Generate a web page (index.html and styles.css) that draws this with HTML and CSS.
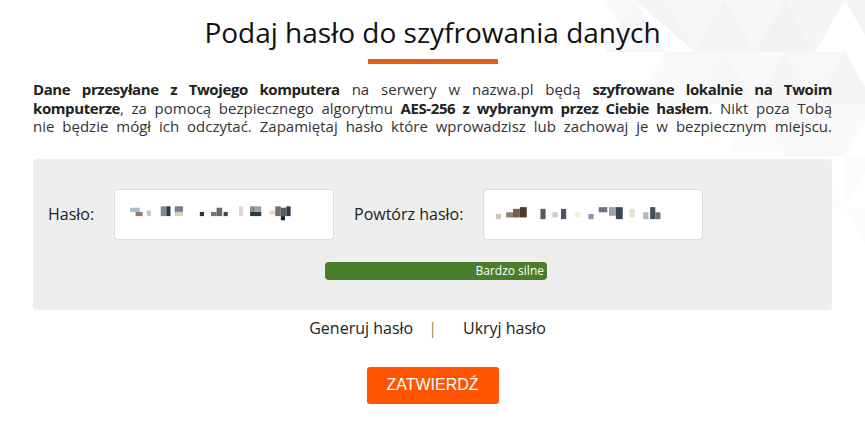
FILE: index.html
```html
<!DOCTYPE html>
<html lang="pl">
<head>
  <meta charset="UTF-8">
  <meta name="viewport" content="width=device-width, initial-scale=1.0">

  <title>Szyfrowanie danych</title>

  <link rel="stylesheet" href="styles.css">
</head>
<body>

<svg class="bg-pattern" width="260" height="330" viewBox="0 0 260 330">
  <polygon points="0,0 30,0 15,26" fill="#f9f9f9"/>
  <polygon points="30,0 60,52 0,52" fill="#f7f7f7"/>
  <polygon points="60,0 90,52 30,0" fill="#f4f4f4"/>
  <polygon points="90,52 120,0 60,0" fill="#f6f6f6"/>
  <polygon points="120,0 150,52 90,52" fill="#f3f3f3"/>
  <polygon points="150,52 180,0 120,0" fill="#f7f7f7"/>
  <polygon points="180,0 210,52 150,52" fill="#f2f2f2"/>
  <polygon points="210,52 240,0 180,0" fill="#f5f5f5"/>
  <polygon points="240,0 260,35 260,0" fill="#f3f3f3"/>
  <polygon points="60,52 90,104 30,104" fill="#fafafa"/>
  <polygon points="90,104 120,52 60,52" fill="#f8f8f8"/>
  <polygon points="120,52 150,104 90,104" fill="#f6f6f6"/>
  <polygon points="150,104 180,52 120,52" fill="#f9f9f9"/>
  <polygon points="180,52 210,104 150,104" fill="#f5f5f5"/>
  <polygon points="210,104 240,52 180,52" fill="#f8f8f8"/>
  <polygon points="240,52 260,87 260,104 210,104" fill="#f4f4f4"/>
  <polygon points="150,104 180,156 120,156" fill="#fbfbfb"/>
  <polygon points="180,156 210,104 150,104" fill="#f9f9f9"/>
  <polygon points="210,104 240,156 180,156" fill="#f8f8f8"/>
  <polygon points="240,156 260,121 260,104 210,104" fill="#fafafa"/>
  <polygon points="210,156 240,208 180,208" fill="#fcfcfc"/>
  <polygon points="240,208 260,173 260,156 240,156" fill="#fbfbfb"/>
  <polygon points="240,208 260,243 260,208" fill="#fcfcfc"/>
</svg>

<div class="page">
  <h1 class="title">Podaj hasło do szyfrowania danych</h1>
  <div class="title-line"></div>

  <p class="intro">
    <b>Dane przesyłane z Twojego komputera</b> na serwery w nazwa.pl będą <b>szyfrowane lokalnie na Twoim</b><br>
    <b>komputerze</b>, za pomocą bezpiecznego algorytmu <b>AES-256 z wybranym przez Ciebie hasłem</b>. Nikt poza Tobą<br>
    nie będzie mógł ich odczytać. Zapamiętaj hasło które wprowadzisz lub zachowaj je w bezpiecznym miejscu.
  </p>

  <div class="pass-box">
    <div class="pass-row">
      <label class="pass-label">Hasło:</label>
      <div class="pass-input">
        <!-- rozmyte haslo -->
        <svg width="162" height="24" viewBox="0 2 116 17">
          <rect x="0" y="6" width="7" height="3" fill="#a9bccb"/>
          <rect x="4" y="9" width="5" height="3" fill="#8c7a6e"/>
          <rect x="12" y="8" width="3" height="4" fill="#b6cfdc"/>
          <rect x="22" y="5" width="4" height="7" fill="#7f8c98"/>
          <rect x="26" y="5" width="3" height="7" fill="#333a44"/>
          <rect x="32" y="5" width="6" height="4" fill="#7a7e8c"/>
          <rect x="32" y="9" width="6" height="3" fill="#d6d2b8"/>
          <rect x="50" y="9" width="3" height="3" fill="#333"/>
          <rect x="58" y="9" width="4" height="3" fill="#777"/>
          <rect x="62" y="6" width="4" height="6" fill="#6b6b63"/>
          <rect x="67" y="9" width="3" height="3" fill="#444"/>
          <rect x="78" y="5" width="3" height="7" fill="#e0d6d6"/>
          <rect x="86" y="5" width="4" height="4" fill="#8a8a8a"/>
          <rect x="86" y="9" width="8" height="3" fill="#2f3a48"/>
          <rect x="90" y="5" width="4" height="4" fill="#9aa0a4"/>
          <rect x="100" y="8" width="4" height="3" fill="#e8d8d0"/>
          <rect x="104" y="5" width="4" height="7" fill="#6c7572"/>
          <rect x="108" y="6" width="4" height="6" fill="#586064"/>
          <rect x="112" y="5" width="3" height="7" fill="#2d3a50"/>
          <rect x="108" y="12" width="3" height="3" fill="#222"/>
        </svg>
      </div>
      <label class="pass-label repeat">Powtórz hasło:</label>
      <div class="pass-input second">
        <svg width="168" height="24" viewBox="0 2 97 14">
          <rect x="0" y="9" width="3" height="3" fill="#ccc4b8"/>
          <rect x="6" y="8" width="4" height="3" fill="#8d8078"/>
          <rect x="10" y="6" width="4" height="5" fill="#7a5e48"/>
          <rect x="14" y="5" width="4" height="6" fill="#4a3a30"/>
          <rect x="26" y="6" width="3" height="6" fill="#555c66"/>
          <rect x="33" y="8" width="3" height="3" fill="#c8ccd4"/>
          <rect x="38" y="6" width="3" height="6" fill="#4a5463"/>
          <rect x="46" y="8" width="3" height="3" fill="#f4f0d8"/>
          <rect x="54" y="9" width="3" height="3" fill="#8a96a4"/>
          <rect x="60" y="5" width="5" height="3" fill="#6b7480"/>
          <rect x="66" y="5" width="4" height="5" fill="#9aa1a8"/>
          <rect x="70" y="5" width="4" height="7" fill="#3a4656"/>
          <rect x="78" y="6" width="3" height="5" fill="#e8e0c8"/>
          <rect x="86" y="8" width="3" height="4" fill="#b0b6ba"/>
          <rect x="90" y="5" width="3" height="7" fill="#44505c"/>
          <rect x="93" y="8" width="3" height="4" fill="#6a7078"/>
        </svg>
      </div>
    </div>

    <div class="strength">
      <div class="strength-bar">Bardzo silne</div>
    </div>
  </div>

  <div class="links">
    <a class="link">Generuj hasło</a>
    <span class="sep">|</span>
    <a class="link">Ukryj hasło</a>
  </div>

  <div class="actions">
    <button class="submit">ZATWIERDŹ</button>
  </div>
</div>

</body>
</html>
```

FILE: styles.css
```css
body {
  margin: 0;
  font-family: 'Open Sans', sans-serif;
  color: #222;
  background-color: #fff;
  position: relative;
  overflow: hidden;
}

.bg-pattern {
  position: absolute;
  top: 0;
  right: 0;
  z-index: -1;
}

.page {
  width: 799px;
  margin: 0 auto;
  padding-top: 13px;
}

.title {
  margin: 0;
  text-align: center;
  font-size: 28px;
  font-weight: 400;
  line-height: 38px;
  color: #111;
}

.title-line {
  width: 130px;
  height: 5px;
  margin: 8px auto 0;
  background-color: #e35f1c;
}

/* 3 linie jak w oryginale, kazda wyjustowana */
.intro {
  margin: 16px 0 0;
  font-size: 15px;
  line-height: 18.5px;
  text-align: justify;
  text-align-last: justify;
  white-space: nowrap;
  color: #333;
}

.intro b {
  font-weight: 700;
  letter-spacing: -0.4px;
  color: #222;
}

.pass-box {
  margin-top: 23px;
  padding: 30px 0 30px 15px;
  background-color: #eeeeee;
  border-radius: 4px;
}

.pass-row {
  display: flex;
  align-items: center;
}

.pass-label {
  font-size: 16px;
  color: #222;
  width: 66px;
  flex-shrink: 0;
}

.pass-label.repeat {
  width: auto;
  margin-left: 20px;
  margin-right: 20px;
}

.pass-input {
  flex-shrink: 0;
  width: 220px;
  height: 51px;
  border: 1px solid #dcdcdc;
  border-radius: 4px;
  background-color: #fff;
  display: flex;
  align-items: center;
  padding-left: 15px;
  box-sizing: border-box;
}

.pass-input.second {
  padding-left: 11px;
}

.strength {
  display: flex;
  padding-left: 277px;
  margin-top: 22px;
}

.strength-bar {
  width: 222px;
  height: 18px;
  box-sizing: border-box;
  padding-right: 3px;
  border-radius: 4px;
  background-color: #4a7d2a;
  color: #fff;
  font-size: 12px;
  line-height: 18px;
  text-align: right;
}

.links {
  display: flex;
  justify-content: center;
  align-items: center;
  margin-top: 8px;
  padding-right: 10px;
  font-size: 16px;
  line-height: 20px;
  color: #222;
}

.link {
  cursor: pointer;
}

.sep {
  color: #a88a50;
  margin: 0 26px 0 15px;
}

.actions {
  display: flex;
  justify-content: center;
  margin-top: 29px;
}

.submit {
  width: 132px;
  height: 37px;
  border: none;
  border-radius: 3px;
  background-color: #ff5400;
  color: #fff;
  font-family: 'Liberation Sans', Arial, sans-serif;
  font-size: 16px;
  cursor: pointer;
}
```
